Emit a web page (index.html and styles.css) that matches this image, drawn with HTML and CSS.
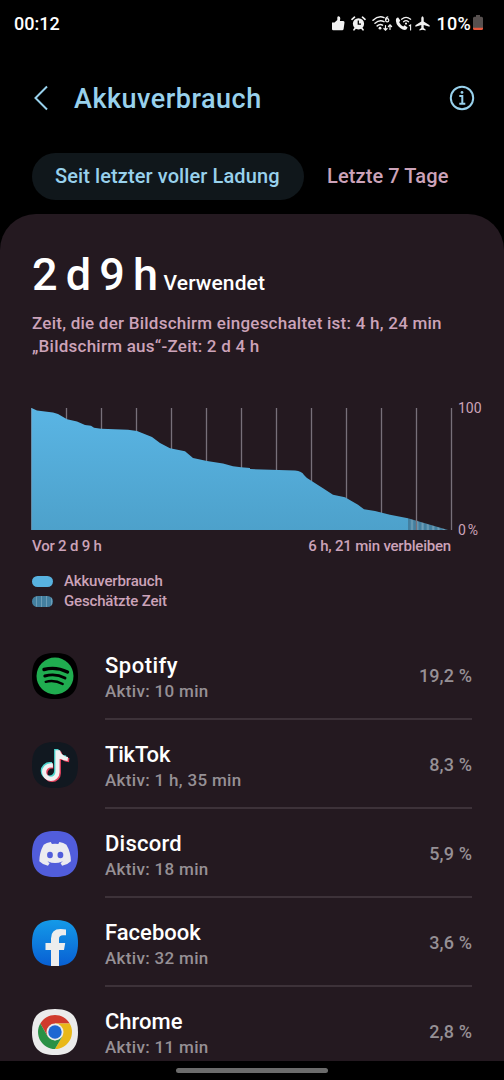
FILE: index.html
```html
<!DOCTYPE html>
<html lang="de">
<head>
  <meta charset="UTF-8">
  <meta name="viewport" content="width=device-width, initial-scale=1.0">
  <title>Akkuverbrauch</title>
  <link rel="stylesheet" href="styles.css">
</head>
<body>
  <!-- Statusleiste -->
  <div class="statusbar">
    <span class="clock">00:12</span>
    <div class="status-icons">
      <svg class="ic-thumb" width="13" height="15" viewBox="0 0 13 15">
        <path fill="#f2f2f2" d="M0 6.500H2.500L5.300 4V1.500Q5.500 .3 6.700 .3 8.400 .6 8.300 2.500L7.900 5h3.300q1.400.2 1.300 1.500l-.9 6.400q-.2 1.300-1.500 1.300H1.200Q0 14.200 0 13z"/>
      </svg>
      <svg class="ic-alarm" width="15" height="15" viewBox="0 0 15 15">
        <path stroke="#f2f2f2" stroke-width="1.700" stroke-linecap="round" d="M1 3.300 3.500 1.200M14 3.300 11.500 1.200M3 13.800l1.200-1.600M12 13.800l-1.200-1.600"/>
        <circle cx="7.500" cy="7.800" r="5.600" fill="#f2f2f2"/>
        <path fill="none" stroke="#000" stroke-width="1.300" d="M7.300 4.600V8.200H10"/>
      </svg>
      <svg class="ic-wifi" width="21" height="17" viewBox="0 0 21 17">
        <g fill="none" stroke="#f2f2f2" stroke-width="1.500" stroke-linecap="round">
          <path d="M1 5.200Q6.500.2 12 2.600M3 8.200Q7.500 4.200 12 6.600M5.200 10.900Q8 8.600 10.500 10.200"/>
          <path stroke-width="1.200" d="M15.800 1.800Q13.600 2.200 13.600 5"/>
          <circle cx="15.200" cy="5.300" r="1.600" stroke-width="1.200"/>
          <path stroke-width="1.200" d="M13.500 10.500v4.500m-1.600-1.500 1.600 1.600 1.600-1.600M18 14.500V10m-1.600 1.500L18 9.900l1.600 1.600"/>
        </g>
        <circle cx="8" cy="13.200" r="1.400" fill="#f2f2f2"/>
      </svg>
      <svg class="ic-call" width="18" height="15" viewBox="0 0 18 15">
        <path fill="#f2f2f2" d="M1 2.800 3 1.300 5.300 4.600 4.200 6.200Q5.400 9 8.200 10.400L9.700 9.200 12.600 11.400 11.300 13.600Q9 14.700 5.500 12.300 0 8.300 1 2.800z"/>
        <g fill="none" stroke="#f2f2f2" stroke-width="1.300" stroke-linecap="round">
          <path d="M6.600 3.200Q11 -.4 15.600 3.200M8.600 5.700Q11 3.700 13.500 5.700"/>
          <path stroke-width="1.100" d="M14.300 9.800 15.600 9v5"/>
        </g>
        <circle cx="11" cy="7.600" r="1.100" fill="#f2f2f2"/>
      </svg>
      <svg class="ic-plane" width="15" height="15" viewBox="0 0 15 15">
        <path fill="#f2f2f2" d="M7.500.3Q8.700.7 8.700 2.200V5.500L14.600 9.200V10.800L8.700 9V12L10.600 13.500V14.600L7.500 13.800 4.400 14.600V13.500L6.300 12V9L.4 10.800V9.200L6.300 5.500V2.200Q6.300.7 7.500.3z"/>
      </svg>
      <span class="percent">10%</span>
      <svg class="ic-battery" width="10" height="16" viewBox="0 0 10 16">
        <path fill="#57504f" d="M3 0h4v1.800h1.500Q10 1.800 10 3.300V13H0V3.300Q0 1.800 1.500 1.800H3z"/>
        <path fill="#e8573d" d="M0 12.800h10v1Q10 15 8.500 15h-7Q0 15 0 13.800z"/>
      </svg>
    </div>
  </div>

  <!-- Kopfzeile -->
  <header class="header">
    <svg class="back" width="16" height="26" viewBox="0 0 16 26">
      <path d="M14 1.500 2.500 13 14 24.500"/>
    </svg>
    <h1>Akkuverbrauch</h1>
    <svg class="info" width="26" height="26" viewBox="0 0 26 26">
      <circle cx="13" cy="13" r="11.200"/>
      <path d="M10.300 11H13.300V18.800M10.300 18.800H16.300"/>
      <circle class="dot" cx="13" cy="7.400" r="1.400"/>
    </svg>
  </header>

  <nav class="tabs">
    <span class="tab active">Seit letzter voller Ladung</span>
    <span class="tab">Letzte 7 Tage</span>
  </nav>

  <main class="card">
    <div class="usage"><span class="big">2 d 9 h</span><span class="used">Verwendet</span></div>
    <p class="line">Zeit, die der Bildschirm eingeschaltet ist: 4 h, 24 min</p>
    <p class="line">„Bildschirm aus“-Zeit: 2 d 4 h</p>

    <!-- Verlauf des Akkustands -->
    <div class="chart">
      <svg width="422" height="124" viewBox="0 0 422 124">
        <defs>
          <linearGradient id="fill" x1="0" y1="0" x2="0" y2="1">
            <stop offset="0" stop-color="#5ab5e4"/>
            <stop offset="1" stop-color="#4da1cb"/>
          </linearGradient>
          <pattern id="stripes" width="5.300" height="10" patternUnits="userSpaceOnUse" x="377">
            <rect width="5.300" height="10" fill="#437f9f"/>
            <rect x="3" width="2" height="10" fill="#6c9db7"/>
          </pattern>
        </defs>
        <path class="grid" d="M.5 1V123M35.500 1V123M70.500 1V123M105.500 1V123M140.500 1V123M175.500 1V123M210.500 1V123M245.500 1V123M280.500 1V123M315.500 1V123M350.500 1V123M385.500 1V123M420.500 1V123"/>
        <path fill="url(#fill)" d="M.5 1 6 3.500 22 5.500 27 7 36 12.200 46 14.500 54 18 60 18.700 63 20.700 70 21.700 97 22.800 106 24 121 30 129 36 139 41.300 154 44.300 162 51 176 54 192 56.500 202 59.300 210 60.300 219 61 219 62 264 63.500Q271 64 273 68L276 71 292 81.300 302 87.700 314 90.300 327 97.700 333 102.300 344 104 359 107.700 377 111.300V123H.5z"/>
        <path fill="url(#stripes)" d="M377 111.300 417 123H377z"/>
        <path class="grid" d="M385.500 113V123"/>
      </svg>
      <div class="scale"><span>100</span><span>0 %</span></div>
    </div>
    <div class="range"><span>Vor 2 d 9 h</span><span>6 h, 21 min verbleiben</span></div>

    <ul class="legend">
      <li><i class="swatch"></i><span>Akkuverbrauch</span></li>
      <li><i class="swatch estimated"></i><span>Geschätzte Zeit</span></li>
    </ul>

    <!-- Liste der Apps -->
    <div class="apps">
      <div class="app">
        <svg class="app-icon" width="46" height="46" viewBox="0 0 46 46">
          <path fill="#000" d="M23 0C39 0 46 7 46 23S39 46 23 46 0 39 0 23 7 0 23 0z"/>
          <circle cx="23" cy="23" r="18.500" fill="#20ad50"/>
          <g fill="none" stroke="#000" stroke-linecap="round">
            <path stroke-width="3.400" d="M12 16.500Q24 13.300 35.500 19"/>
            <path stroke-width="2.900" d="M12.800 23Q23.500 20 33 25"/>
            <path stroke-width="2.400" d="M13.700 28.800Q22.500 26.500 30.700 31"/>
          </g>
        </svg>
        <div class="info-box">
          <div class="names"><h2 class="n-spotify">Spotify</h2><p>Aktiv: 10 min</p></div>
          <span class="value">19,2 %</span>
        </div>
      </div>
      <div class="app">
        <svg class="app-icon" width="46" height="46" viewBox="0 0 46 46">
          <path fill="#111820" d="M23 0C39 0 46 7 46 23S39 46 23 46 0 39 0 23 7 0 23 0z"/>
          <g fill="none" stroke-width="4.200">
            <path stroke="#4fd6cf" d="M24.200 7V29.200A6.700 6.700 0 1 1 17.500 22.200H20M24.500 8Q26 15 34 15.600"/>
            <path stroke="#e8435f" d="M26.800 9.500V31.200A6.700 6.700 0 1 1 20 24.500H21.300M27.300 10Q28.500 17.500 37.200 18.200"/>
            <path stroke="#f1f1f1" d="M25.500 8.200V30.200A6.700 6.700 0 1 1 18.800 23.400H20.900M26 8.700Q27.300 16.200 35.800 17"/>
          </g>
        </svg>
        <div class="info-box">
          <div class="names"><h2 class="n-tiktok">TikTok</h2><p>Aktiv: 1 h, 35 min</p></div>
          <span class="value">8,3 %</span>
        </div>
      </div>
      <div class="app">
        <svg class="app-icon" width="46" height="46" viewBox="0 0 46 46">
          <path fill="#515ddb" d="M23 0C39 0 46 7 46 23S39 46 23 46 0 39 0 23 7 0 23 0z"/>
          <path fill="#ebebf0" d="M18.800 11Q14.500 11.500 11.700 13.700 7.500 21 7.300 30.200 10.800 33.800 16 34.700L17.700 32 15.600 30.800 16 30.400Q23 33.500 30.200 30.400L30.600 30.800 28.500 32 30.100 34.700Q35.500 33.800 38.900 30.200 38.800 21 34.400 13.700 31.500 11.500 27.400 11L26.300 12.900Q23 12.400 19.900 12.900z"/>
          <ellipse cx="18" cy="24" rx="2.900" ry="3.200" fill="#515ddb"/>
          <ellipse cx="28.400" cy="24" rx="2.900" ry="3.200" fill="#515ddb"/>
        </svg>
        <div class="info-box">
          <div class="names"><h2 class="n-discord">Discord</h2><p>Aktiv: 18 min</p></div>
          <span class="value">5,9 %</span>
        </div>
      </div>
      <div class="app">
        <svg class="app-icon" width="46" height="46" viewBox="0 0 46 46">
          <defs>
            <linearGradient id="fb" x1="0" y1="0" x2="0" y2="1">
              <stop offset="0" stop-color="#149ae8"/>
              <stop offset="1" stop-color="#085fd3"/>
            </linearGradient>
          </defs>
          <path fill="url(#fb)" d="M23 0C39 0 46 7 46 23S39 46 23 46 0 39 0 23 7 0 23 0z"/>
          <path fill="#ededed" d="M19 46V30H13.500V23H19V18.500Q19 9 28.500 9 31.500 9 34 9.500V15.300H31Q27 15.300 27 19V23H33.200L32 30H27V46z"/>
        </svg>
        <div class="info-box">
          <div class="names"><h2>Facebook</h2><p>Aktiv: 32 min</p></div>
          <span class="value">3,6 %</span>
        </div>
      </div>
      <div class="app">
        <svg class="app-icon" width="46" height="46" viewBox="0 0 46 46">
          <path fill="#ebebeb" d="M23 0C39 0 46 7 46 23S39 46 23 46 0 39 0 23 7 0 23 0z"/>
          <path fill="#d03b2d" d="M23 23V14.500H37.700A17 17 0 0 0 8.300 14.500L15.600 27.300z"/>
          <path fill="#e9b818" d="M23 14.500H37.700A17 17 0 0 1 23 40L30.400 27.300z"/>
          <path fill="#2a9145" d="M8.300 14.500A17 17 0 0 0 23 40L30.400 27.300 23 31.500 15.600 27.300z"/>
          <circle cx="23" cy="23" r="8.500" fill="#ebebeb"/>
          <circle cx="23" cy="23" r="6.700" fill="#1d67d2"/>
        </svg>
        <div class="info-box">
          <div class="names"><h2>Chrome</h2><p>Aktiv: 11 min</p></div>
          <span class="value">2,8 %</span>
        </div>
      </div>
    </div>
  </main>

  <footer class="navbar"><div class="handle"></div></footer>
</body>
</html>
```
FILE: styles.css
```css
/* Grundeinstellungen */
* {
  margin: 0;
  padding: 0;
  box-sizing: border-box;
}
body {
  width: 504px;
  height: 1080px;
  display: flex;
  flex-direction: column;
  background: #000;
  color: #fff;
  font-family: Roboto, "Liberation Sans", sans-serif;
  font-weight: 500;
  overflow: hidden;
}
svg {
  display: block;
  flex: none;
}
span, h1, h2, p {
  white-space: nowrap;
}

/* Statusleiste */
.statusbar {
  height: 46px;
  flex: none;
  display: flex;
  align-items: center;
  justify-content: space-between;
  padding: 0 21px 0 14px;
  font-size: 18px;
}
.status-icons {
  display: flex;
  align-items: center;
}
.ic-alarm {
  margin-left: 6px;
}
.ic-wifi {
  margin-left: 6px;
}
.ic-call {
  margin-left: 2px;
}
.ic-plane {
  margin-left: 2px;
}
.percent {
  margin: 0 2px 0 6px;
  letter-spacing: 0.3px;
}

/* Kopfzeile */
.header {
  height: 104px;
  flex: none;
  display: flex;
  align-items: center;
  padding: 0 29px 0 33px;
}
.header h1 {
  flex: 1;
  margin-left: 25px;
  padding-top: 2px;
  font-size: 27px;
  font-weight: 500;
  letter-spacing: 0.5px;
  color: #98d1ec;
}
.back, .info {
  fill: none;
  stroke: #98d1ec;
  stroke-width: 2;
}
.info .dot {
  fill: #98d1ec;
  stroke: none;
}

/* Reiter */
.tabs {
  height: 64px;
  flex: none;
  display: flex;
  align-items: flex-start;
  padding: 3px 32px 0;
}
.tab {
  padding: 0 23px;
  line-height: 47px;
  font-size: 20px;
  letter-spacing: 0.1px;
  color: #cca3b9;
}
.tab.active {
  width: 272px;
  border-radius: 24px;
  background: #10171b;
  color: #98d1ec;
}

/* Karte */
.card {
  height: 847px;
  flex: none;
  padding: 34px 32px 0;
  border-radius: 36px 36px 0 0;
  background: #241920;
  overflow: hidden;
}
.usage {
  height: 64px;
  display: flex;
  align-items: baseline;
  line-height: 54px;
}
.big {
  font-size: 45px;
  letter-spacing: -1.5px;
}
.used {
  margin-left: 7px;
  font-size: 21px;
  letter-spacing: 0.1px;
}
.line {
  height: 23px;
  line-height: 23px;
  font-size: 17px;
  letter-spacing: 0.24px;
  color: #cca3b9;
}

/* Diagramm */
.chart {
  display: flex;
  margin: 49px 0 0 -1px;
}
.grid {
  stroke: #78707a;
  stroke-width: 1.3;
}
.scale {
  display: flex;
  flex-direction: column;
  justify-content: space-between;
  margin: -7px 0 -8px 5px;
  font-size: 14px;
  font-weight: 400;
  line-height: 17px;
  word-spacing: -1.5px;
  color: #cca3b9;
}
.range {
  display: flex;
  justify-content: space-between;
  width: 419px;
  margin-top: 6px;
  font-size: 15px;
  line-height: 18px;
  letter-spacing: -0.2px;
  color: #cca3b9;
}
.legend {
  margin-top: 16px;
  list-style: none;
  font-size: 15px;
  line-height: 20px;
  letter-spacing: -0.16px;
  color: #cca3b9;
}
.legend li {
  display: flex;
  align-items: center;
  gap: 11px;
}
.swatch {
  width: 21px;
  height: 11px;
  border-radius: 6px;
  background: #58b2e0;
}
.swatch.estimated {
  background: repeating-linear-gradient(90deg, #437f9f 0 4px, #6c9db7 4px 5px);
}

/* App-Liste */
.apps {
  margin-top: 20px;
}
.app {
  height: 89px;
  display: flex;
  align-items: center;
  gap: 27px;
}
.info-box {
  flex: 1;
  height: 89px;
  display: flex;
  align-items: center;
  justify-content: space-between;
  border-bottom: 2px solid #3d3239;
}
.names {
  padding-top: 7px;
}
.names h2 {
  font-size: 22px;
  line-height: 27px;
  font-weight: 500;
}
.names .n-spotify {
  letter-spacing: 0.5px;
}
.names .n-tiktok {
  letter-spacing: -0.2px;
}
.names .n-discord {
  letter-spacing: 0.25px;
}
.names p {
  font-size: 17px;
  line-height: 25px;
  letter-spacing: 0.32px;
  color: #969095;
}
.value {
  padding-top: 2px;
  font-size: 18px;
  letter-spacing: 0.1px;
  color: #969095;
}

/* Navigationsleiste */
.navbar {
  flex: 1;
  display: flex;
  justify-content: center;
  padding-top: 7px;
}
.handle {
  width: 152px;
  height: 5px;
  border-radius: 3px;
  background: #6b6b6b;
}
```
